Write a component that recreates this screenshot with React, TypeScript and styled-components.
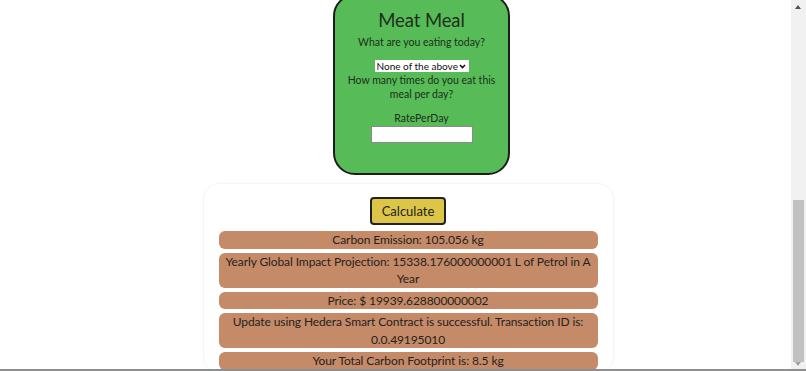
import React from 'react'
import styled, { createGlobalStyle } from 'styled-components'

const GlobalStyle = createGlobalStyle`
  body {
    margin: 0;
    background: #ffffff;
    font-family: 'Lato', 'Noto Sans', sans-serif;
    color: #2b2b2b;
  }
`;

const Page = styled.div`
  display: flex;
  flex-direction: column;
  align-items: center;
  padding: 0 15px 0 25px;
`;

const MealCard = styled.div`
  width: 153px;
  margin: -6px 0 0 27px;
  padding: 12px 10px 30px;
  background: #57bc57;
  border: 2px solid #1c1c1c;
  border-radius: 22px;
  display: flex;
  flex-direction: column;
  align-items: center;
  text-align: center;
  color: #1d2f1d;
`;

const MealTitle = styled.h2`
  margin: 0;
  font-size: 18.5px;
  line-height: 24px;
  font-weight: 400;
  letter-spacing: -0.1px;
`;

const MealText = styled.p<{ $gap?: number }>`
  margin: ${p => p.$gap ?? 1}px 0 0;
  font-size: 10.5px;
  line-height: 14px;
`;

const Question = styled(MealText)`
  margin-top: 2px;
  line-height: 16px;
`;

const SelectBox = styled.div`
  position: relative;
  margin-top: 10px;
  width: 94px;
  height: 12px;
  background: #ffffff;
`;

const MealSelect = styled.select`
  appearance: none;
  display: block;
  width: 100%;
  height: 12px;
  padding: 0 10px 0 2px;
  font-family: inherit;
  font-size: 10px;
  line-height: 12px;
  border: none;
  border-radius: 0;
  background: transparent;
  color: #111;
`;

const Chevron = styled.svg`
  position: absolute;
  right: 3px;
  top: 3.5px;
  width: 7px;
  height: 5px;
  pointer-events: none;
`;

const RateInput = styled.input`
  margin-top: 1px;
  width: 102px;
  height: 17px;
  box-sizing: border-box;
  border: 1px solid #8a8a8a;
  background: #ffffff;
`;

const ResultCard = styled.div`
  margin-top: 8px;
  width: 411px;
  box-sizing: border-box;
  padding: 13px 15px 2px;
  border: 1px solid #f5f5f5;
  border-radius: 16px;
  box-shadow: 0 0 5px rgba(0, 0, 0, 0.02);
  display: flex;
  flex-direction: column;
  align-items: center;
  gap: 4px;
`;

const CalcButton = styled.button`
  width: 76px;
  height: 28px;
  margin-bottom: 2px;
  flex-shrink: 0;
  background: #dcc547;
  border: 2px solid #222222;
  border-radius: 4px;
  font-family: inherit;
  font-size: 13px;
  color: #222;
`;

const ResultRow = styled.div`
  width: 100%;
  box-sizing: border-box;
  padding: 0 2px;
  background: #c58a68;
  border-radius: 6px;
  text-align: center;
  font-size: 12px;
  line-height: 17.5px;
  letter-spacing: -0.1px;
  color: #262220;
`;

const ScrollTrack = styled.div`
  position: fixed;
  top: 0;
  right: 0;
  bottom: 0;
  width: 15px;
  background: #f1f1f1;
`;

const ScrollArrow = styled.div<{ $down?: boolean }>`
  position: absolute;
  left: 4px;
  ${p => (p.$down ? 'bottom: 5px;' : 'top: 5px;')}
  width: 0;
  height: 0;
  border-left: 3.5px solid transparent;
  border-right: 3.5px solid transparent;
  ${p => (p.$down ? 'border-top: 4px solid #a3a3a3;' : 'border-bottom: 4px solid #505050;')}
`;

const ScrollThumb = styled.div`
  position: absolute;
  left: 2px;
  right: 2px;
  top: 200px;
  height: 162px;
  background: #c1c1c1;
`;

const BottomEdge = styled.div`
  position: fixed;
  left: 0;
  right: 0;
  bottom: 0;
  height: 2px;
  background: #8e8e8e;
`;

const results = [
  'Carbon Emission: 105.056 kg',
  'Yearly Global Impact Projection: 15338.176000000001 L of Petrol in A Year',
  'Price: $ 19939.628800000002',
  'Update using Hedera Smart Contract is successful. Transaction ID is: 0.0.49195010',
  'Your Total Carbon Footprint is: 8.5 kg',
]

export default function App() {
  return <>
    <GlobalStyle />
    <Page>
      <MealCard>
        <MealTitle>Meat Meal</MealTitle>
        <Question>What are you eating today?</Question>
        <SelectBox>
          <MealSelect defaultValue='none'>
            <option value='none'>None of the above</option>
          </MealSelect>
          <Chevron viewBox='0 0 7 5'>
            <path d='M1 1 L3.5 3.5 L6 1' fill='none' stroke='#111' strokeWidth='1.6' />
          </Chevron>
        </SelectBox>
        <MealText>How many times do you eat this meal per day?</MealText>
        <MealText $gap={10}>RatePerDay</MealText>
        <RateInput type='text' />
      </MealCard>
      <ResultCard>
        <CalcButton>Calculate</CalcButton>
        {results.map(r => <ResultRow key={r}>{r}</ResultRow>)}
      </ResultCard>
    </Page>
    <ScrollTrack>
      <ScrollArrow />
      <ScrollThumb />
      <ScrollArrow $down />
    </ScrollTrack>
    <BottomEdge />
  </>
}
